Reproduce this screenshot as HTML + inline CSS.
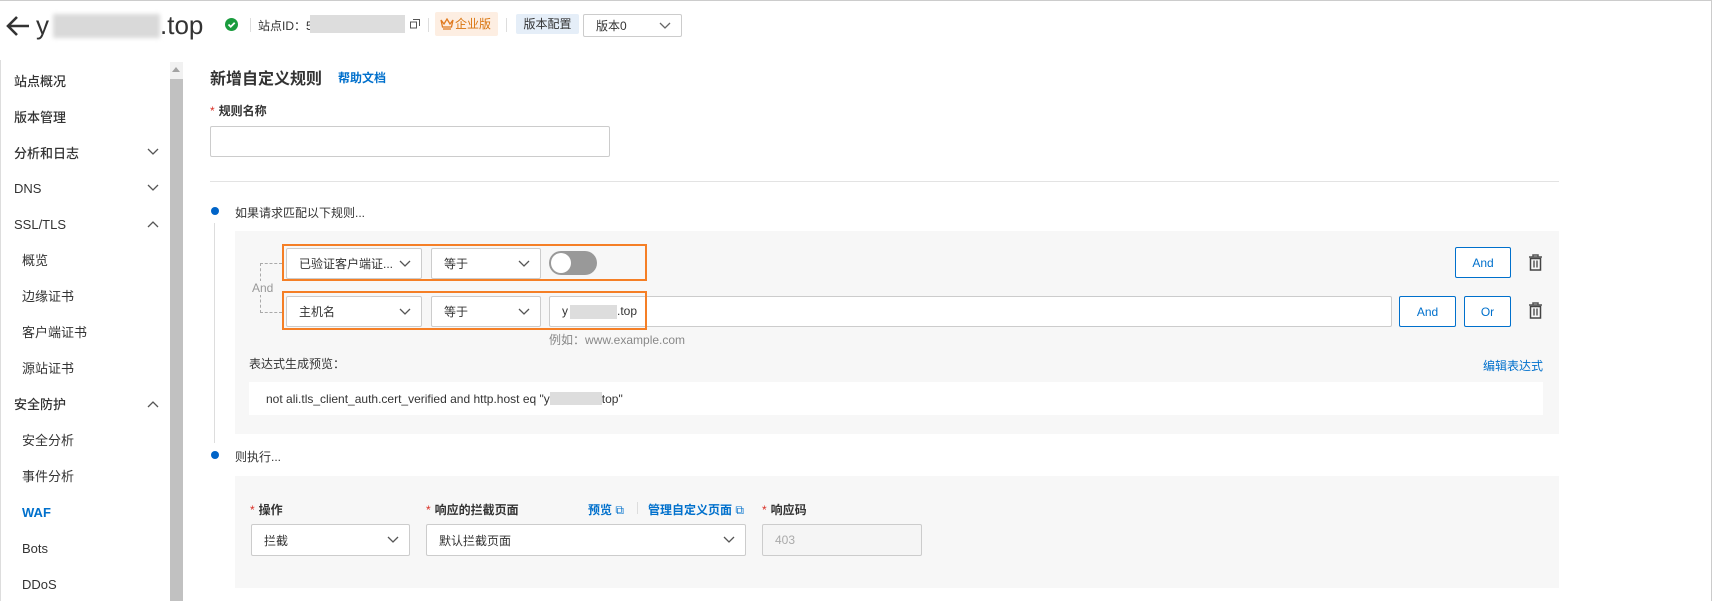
<!DOCTYPE html>
<html><head><meta charset="utf-8"><style>
*{box-sizing:border-box;margin:0;padding:0}
body{width:1712px;height:601px;overflow:hidden;background:#fff;font-family:"Liberation Sans","Noto Sans CJK SC",sans-serif;color:#333;position:relative;font-size:12px}
.a{position:absolute}
.nav{position:absolute;left:14px;font-size:13px;color:#333;font-weight:500;line-height:16px}
.sub{left:22px;font-weight:400}
.chev{position:absolute;left:147px;width:12px;height:8px}
.sel{position:absolute;background:#fff;border:1px solid #ccc;border-radius:2px;font-size:12px;color:#333;padding-left:12px;display:flex;align-items:center}
.sel svg{position:absolute;right:10px;top:50%;margin-top:-4px}
.btn{position:absolute;border:1px solid #0070cc;border-radius:2px;color:#0070cc;background:#fff;font-size:12px;display:flex;align-items:center;justify-content:center}
.lbl{position:absolute;font-size:12px;font-weight:bold;color:#333}
.lbl i{color:#d93026;font-style:normal;margin-right:4px;font-weight:normal}
.div{position:absolute;width:1px;height:14px;background:#ddd}
</style></head><body>
<div class="a" style="left:0;top:0;width:1712px;height:1px;background:#ccc"></div>
<div class="a" style="left:1711px;top:0;width:1px;height:601px;background:#ccc"></div>
<div class="a" style="left:0;top:60px;width:1px;height:541px;background:#ddd"></div>

<!-- header -->
<svg class="a" style="left:5px;top:15px" width="26" height="22" viewBox="0 0 26 22"><path d="M24 11H4M12 2L3 11l9 9" stroke="#333" stroke-width="2.6" fill="none"/></svg>
<div class="a" style="left:36px;top:10px;font-size:26px;color:#333;line-height:30px">y</div>
<div class="a" style="left:53px;top:14px;width:107px;height:24px;background:#d9d9d9;filter:blur(2px)"></div>
<div class="a" style="left:160px;top:10px;font-size:26px;color:#333;line-height:30px">.top</div>
<div class="a" style="left:225px;top:18px;width:13px;height:13px;border-radius:50%;background:#1a9c3e"></div>
<svg class="a" style="left:225px;top:18px" width="13" height="13"><path d="M3.5 6.5l2.2 2.2 4-4" stroke="#fff" stroke-width="1.8" fill="none"/></svg>
<div class="div" style="left:250px;top:18px"></div>
<div class="a" style="left:258px;top:17px;font-size:12px;color:#333">站点ID：5</div>
<div class="a" style="left:310px;top:15px;width:95px;height:18px;background:#ddd"></div>
<svg class="a" style="left:410px;top:19px" width="10" height="10"><rect x="0.5" y="3" width="6" height="6" fill="none" stroke="#555"/><path d="M3 0.5h6.5V7" fill="none" stroke="#555"/></svg>
<div class="div" style="left:428px;top:18px"></div>
<div class="a" style="left:435px;top:12px;width:63px;height:24px;background:#fdeee2;border-radius:2px;color:#d9740d;font-size:12px;line-height:24px;padding-left:20px">企业版</div>
<svg class="a" style="left:440px;top:18px" width="14" height="12"><path d="M1 2l3 4 3-5 3 5 3-4-1.5 7H2.5z M3 11h8" fill="none" stroke="#e07a1f" stroke-width="1.3"/></svg>
<div class="div" style="left:506px;top:18px"></div>
<div class="a" style="left:516px;top:14px;width:63px;height:20px;background:#e5eef8;border-radius:2px;color:#333;font-size:12px;line-height:20px;text-align:center">版本配置</div>
<div class="sel" style="left:583px;top:14px;width:99px;height:23px">版本0<svg width="12" height="8"><path d="M1 1l5 5 5-5" stroke="#666" fill="none" stroke-width="1.3"/></svg></div>

<!-- sidebar -->
<div class="a" style="left:170px;top:62px;width:13px;height:539px;background:#f1f1f1"></div>
<div class="a" style="left:170px;top:79px;width:13px;height:522px;background:#c1c1c1"></div>
<svg class="a" style="left:172px;top:67px" width="9" height="6"><path d="M0 5h8L4 0z" fill="#a3a3a3"/></svg>

<div class="nav" style="top:74px">站点概况</div>
<div class="nav" style="top:110px">版本管理</div>
<div class="nav" style="top:146px">分析和日志</div>
<div class="nav" style="top:181px">DNS</div>
<div class="nav" style="top:217px">SSL/TLS</div>
<div class="nav sub" style="top:253px">概览</div>
<div class="nav sub" style="top:289px">边缘证书</div>
<div class="nav sub" style="top:325px">客户端证书</div>
<div class="nav sub" style="top:361px">源站证书</div>
<div class="nav" style="top:397px">安全防护</div>
<div class="nav sub" style="top:433px">安全分析</div>
<div class="nav sub" style="top:469px">事件分析</div>
<div class="nav sub" style="top:505px;color:#0070cc;font-weight:bold">WAF</div>
<div class="nav sub" style="top:541px">Bots</div>
<div class="nav sub" style="top:577px">DDoS</div>
<svg class="chev" style="top:148px"><path d="M1 1l5 5 5-5" stroke="#555" fill="none" stroke-width="1.3"/></svg>
<svg class="chev" style="top:184px"><path d="M1 1l5 5 5-5" stroke="#555" fill="none" stroke-width="1.3"/></svg>
<svg class="chev" style="top:220px"><path d="M1 7l5-5 5 5" stroke="#555" fill="none" stroke-width="1.3"/></svg>
<svg class="chev" style="top:400px"><path d="M1 7l5-5 5 5" stroke="#555" fill="none" stroke-width="1.3"/></svg>

<!-- content -->
<div class="a" style="left:210px;top:65px;font-size:16px;font-weight:bold;color:#333">新增自定义规则</div>
<div class="a" style="left:338px;top:69px;font-size:12px;color:#0070cc;font-weight:bold">帮助文档</div>
<div class="lbl" style="left:210px;top:102px"><i>*</i>规则名称</div>
<div class="a" style="left:210px;top:126px;width:400px;height:31px;border:1px solid #ccc;border-radius:2px"></div>
<div class="a" style="left:210px;top:181px;width:1349px;height:1px;background:#e3e3e3"></div>

<div class="a" style="left:214px;top:223px;width:1px;height:220px;background:#ddd"></div>
<div class="a" style="left:211px;top:207px;width:8px;height:8px;border-radius:50%;background:#0064c8"></div>
<div class="a" style="left:235px;top:204px;font-size:12px;color:#333">如果请求匹配以下规则...</div>

<div class="a" style="left:235px;top:231px;width:1324px;height:203px;background:#f7f7f7"></div>
<!-- connector -->
<div class="a" style="left:260px;top:263px;width:22px;height:50px;border:1px dashed #aaa;border-right:none"></div>
<div class="a" style="left:250px;top:281px;background:#f7f7f7;color:#999;font-size:12px;padding:0 2px">And</div>

<div class="sel" style="left:286px;top:248px;width:136px;height:31px">已验证客户端证...<svg width="12" height="8"><path d="M1 1l5 5 5-5" stroke="#555" fill="none" stroke-width="1.3"/></svg></div>
<div class="sel" style="left:431px;top:248px;width:110px;height:31px">等于<svg width="12" height="8"><path d="M1 1l5 5 5-5" stroke="#555" fill="none" stroke-width="1.3"/></svg></div>
<div class="a" style="left:549px;top:251px;width:48px;height:24px;border-radius:12px;background:#999"></div>
<div class="a" style="left:551px;top:253px;width:20px;height:20px;border-radius:50%;background:#fff"></div>
<div class="a" style="left:282px;top:244px;width:365px;height:37px;border:2.5px solid #f57f26"></div>
<div class="btn" style="left:1455px;top:247px;width:56px;height:31px">And</div>
<svg class="a" style="left:1528px;top:254px" width="15" height="17" viewBox="0 0 15 17"><path d="M1 3h13M5 3V1h5v2" stroke="#555" stroke-width="1.5" fill="none"/><rect x="2.5" y="4.5" width="10" height="11.5" fill="none" stroke="#444" stroke-width="1.5"/><path d="M6 6.5v7M9 6.5v7" stroke="#444" stroke-width="1.3"/></svg>

<div class="sel" style="left:286px;top:296px;width:136px;height:31px">主机名<svg width="12" height="8"><path d="M1 1l5 5 5-5" stroke="#555" fill="none" stroke-width="1.3"/></svg></div>
<div class="sel" style="left:431px;top:296px;width:110px;height:31px">等于<svg width="12" height="8"><path d="M1 1l5 5 5-5" stroke="#555" fill="none" stroke-width="1.3"/></svg></div>
<div class="a" style="left:549px;top:296px;width:843px;height:31px;border:1px solid #ccc;border-radius:2px;background:#fff"></div>
<div class="a" style="left:562px;top:304px;font-size:12px;color:#333">y</div>
<div class="a" style="left:570px;top:305px;width:47px;height:14px;background:#ddd"></div>
<div class="a" style="left:617px;top:304px;font-size:12px;color:#333">.top</div>
<div class="a" style="left:282px;top:291px;width:365px;height:39px;border:2.5px solid #f57f26"></div>
<div class="btn" style="left:1399px;top:296px;width:57px;height:31px">And</div>
<div class="btn" style="left:1464px;top:296px;width:47px;height:31px">Or</div>
<svg class="a" style="left:1528px;top:302px" width="15" height="17" viewBox="0 0 15 17"><path d="M1 3h13M5 3V1h5v2" stroke="#555" stroke-width="1.5" fill="none"/><rect x="2.5" y="4.5" width="10" height="11.5" fill="none" stroke="#444" stroke-width="1.5"/><path d="M6 6.5v7M9 6.5v7" stroke="#444" stroke-width="1.3"/></svg>
<div class="a" style="left:549px;top:331px;font-size:12px;color:#888">例如：www.example.com</div>

<div class="a" style="left:249px;top:355px;font-size:12px;color:#333">表达式生成预览：</div>
<div class="a" style="left:1483px;top:357px;font-size:12px;color:#0070cc">编辑表达式</div>
<div class="a" style="left:249px;top:382px;width:1294px;height:33px;background:#fff"></div>
<div class="a" style="left:266px;top:392px;font-size:12px;color:#333;white-space:nowrap">not ali.tls_client_auth.cert_verified and http.host eq "y<span style="display:inline-block;width:52px;height:13px;background:#ddd;vertical-align:-2px"></span>top"</div>

<div class="a" style="left:211px;top:451px;width:8px;height:8px;border-radius:50%;background:#0064c8"></div>
<div class="a" style="left:235px;top:448px;font-size:12px;color:#333">则执行...</div>

<div class="a" style="left:235px;top:476px;width:1324px;height:112px;background:#f7f7f7"></div>
<div class="lbl" style="left:250px;top:501px"><i>*</i>操作</div>
<div class="lbl" style="left:426px;top:501px"><i>*</i>响应的拦截页面</div>
<div class="a" style="left:588px;top:501px;font-size:12px;font-weight:bold;color:#0070cc">预览 <span style="font-weight:normal">⧉</span></div>
<div class="div" style="left:637px;top:502px;height:12px"></div>
<div class="a" style="left:648px;top:501px;font-size:12px;font-weight:bold;color:#0070cc">管理自定义页面 <span style="font-weight:normal">⧉</span></div>
<div class="lbl" style="left:762px;top:501px"><i>*</i>响应码</div>
<div class="sel" style="left:251px;top:524px;width:159px;height:32px">拦截<svg width="12" height="8"><path d="M1 1l5 5 5-5" stroke="#555" fill="none" stroke-width="1.3"/></svg></div>
<div class="sel" style="left:426px;top:524px;width:320px;height:32px">默认拦截页面<svg width="12" height="8"><path d="M1 1l5 5 5-5" stroke="#555" fill="none" stroke-width="1.3"/></svg></div>
<div class="sel" style="left:762px;top:524px;width:160px;height:32px;background:#f5f5f5;color:#aaa">403</div>
</body></html>
